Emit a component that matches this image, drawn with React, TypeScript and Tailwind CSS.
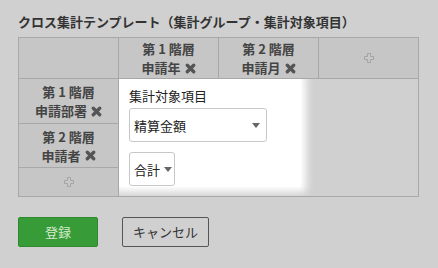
import React from 'react';

const font = { fontFamily: '"Noto Sans CJK JP", "Noto Sans", sans-serif' };

function RemoveIcon() {
  return (
    <svg width="11" height="11" viewBox="0 0 12 12" className="inline-block ml-1 -mt-[2px] align-middle">
      <path d="M2.5 2.5 L9.5 9.5 M9.5 2.5 L2.5 9.5" stroke="#555" strokeWidth="3.6" strokeLinecap="round" />
    </svg>
  );
}

function AddIcon() {
  return (
    <svg width="12" height="12" viewBox="0 0 12 12">
      <path
        d="M4.5 1.5 h3 v3 h3 v3 h-3 v3 h-3 v-3 h-3 v-3 h3 z"
        fill="#c8c8c8"
        stroke="#a4a4a4"
        strokeWidth="1"
        strokeLinejoin="round"
      />
    </svg>
  );
}

function Caret() {
  return <span className="w-0 h-0 border-l-[4px] border-r-[4px] border-t-[5px] border-l-transparent border-r-transparent border-t-[#666]" />;
}

export default function App() {
  const headers = [
    { level: '第 1 階層', name: '申請年' },
    { level: '第 2 階層', name: '申請月' },
  ];
  const rows = [
    { level: '第 1 階層', name: '申請部署' },
    { level: '第 2 階層', name: '申請者' },
  ];

  return (
    <div className="w-[438px] h-[268px] bg-[#d0d0d0] px-[18px] pt-[13px] text-[#333]" style={font}>
      <h2 className="text-[13px] font-bold leading-[18px] text-[#333] mb-[6px]">
        クロス集計テンプレート（集計グループ・集計対象項目）
      </h2>

      {/* Cross table */}
      <div className="w-[401px] border-l border-t border-[#a8a8a8] text-[13px] font-bold text-[#444] leading-[19px]">
        <div className="flex">
          <div className="w-[100px] h-[41px] border-r border-b border-[#a8a8a8] bg-[#c6c6c6]" />
          {headers.map((h) => (
            <div key={h.level} className="w-[100px] h-[41px] border-r border-b border-[#a8a8a8] bg-[#c6c6c6] flex flex-col items-center justify-center">
              <span>{h.level}</span>
              <span>{h.name}<RemoveIcon /></span>
            </div>
          ))}
          <div className="w-[100px] h-[41px] border-r border-b border-[#a8a8a8] bg-[#c6c6c6] flex items-center justify-center">
            <AddIcon />
          </div>
        </div>

        <div className="flex">
          <div className="flex flex-col">
            {rows.map((r, i) => (
              <div key={r.level} className={`w-[100px] ${i === 0 ? 'h-[45px]' : 'h-[44px]'} border-r border-b border-[#a8a8a8] bg-[#c6c6c6] flex flex-col items-center justify-center`}>
                <span>{r.level}</span>
                <span>{r.name}<RemoveIcon /></span>
              </div>
            ))}
            <div className="w-[100px] h-[29px] border-r border-b border-[#a8a8a8] bg-[#c6c6c6] flex items-center justify-center">
              <AddIcon />
            </div>
          </div>

          <div className="w-[300px] h-[118px] border-r border-b border-[#a8a8a8] bg-[#d0d0d0] overflow-hidden">
            <div className="w-[182px] h-[108px] bg-white shadow-[0_0_8px_5px_#ffffff] px-[10px] pt-[8px] font-normal text-[#222]">
              <div className="text-[13px] leading-[18px]">集計対象項目</div>
              <div className="mt-[3px] w-[138px] h-[34px] rounded-[3px] border border-[#c8c8c8] flex items-center justify-between pl-[4px] pr-[6px]">
                <span className="text-[13px]">精算金額</span>
                <Caret />
              </div>
              <div className="mt-[10px] w-[46px] h-[34px] rounded-[3px] border border-[#c8c8c8] flex items-center gap-[4px] pl-[4px]">
                <span className="text-[13px]">合計</span>
                <Caret />
              </div>
            </div>
          </div>
        </div>
      </div>

      {/* Actions */}
      <div className="flex gap-[24px] mt-[20px]">
        <button className="w-[80px] h-[30px] bg-[#379b37] border border-[#2f8a2f] rounded-[2px] text-[13px] text-[#d8ecd0]">
          登録
        </button>
        <button className="w-[87px] h-[30px] border border-[#555] rounded-[2px] text-[13px] text-[#333]">
          キャンセル
        </button>
      </div>
    </div>
  );
}
